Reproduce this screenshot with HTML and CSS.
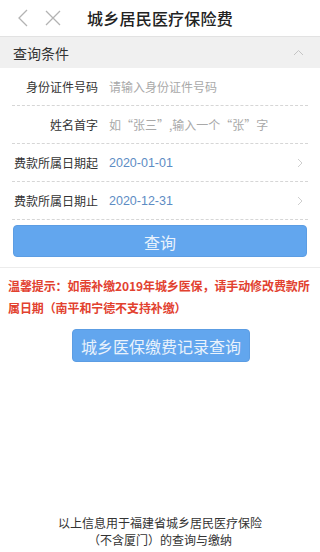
FILE: index.html
```html
<!DOCTYPE html>
<html lang="zh-CN">
<head>
  <meta charset="UTF-8">
  <meta name="viewport" content="width=device-width, initial-scale=1.0">
  <link rel="stylesheet" href="styles.css">
  <title>城乡居民医疗保险费</title>
</head>
<body>
  <div class="page">
    <div class="top-bar">
      <div class="top-icons">
        <svg class="icon-back" width="12" height="18" viewBox="0 0 12 18"><path d="M10 1 L2 9 L10 17" fill="none" stroke="#b3b3b3" stroke-width="1.3"/></svg>
        <svg class="icon-close" width="16" height="16" viewBox="0 0 16 16"><path d="M1 1 L15 15 M15 1 L1 15" fill="none" stroke="#b3b3b3" stroke-width="1.3"/></svg>
      </div>
      <h1 class="title">城乡居民医疗保险费</h1>
      <div></div>
    </div>

    <div class="section-head">
      <span>查询条件</span>
      <svg width="11" height="7" viewBox="0 0 11 7"><path d="M1 6 L5.5 1.5 L10 6" fill="none" stroke="#c4c4c4" stroke-width="1"/></svg>
    </div>

    <form class="query-form">
      <div class="form-row">
        <label>身份证件号码</label>
        <span class="placeholder">请输入身份证件号码</span>
      </div>
      <div class="form-row">
        <label>姓名首字</label>
        <span class="placeholder">如“张三”,输入一个“张”字</span>
      </div>
      <div class="form-row">
        <label>费款所属日期起</label>
        <span class="date">2020-01-01</span>
        <svg class="arrow" width="6" height="10" viewBox="0 0 6 10"><path d="M1 1 L5 5 L1 9" fill="none" stroke="#cfcfcf" stroke-width="1"/></svg>
      </div>
      <div class="form-row">
        <label>费款所属日期止</label>
        <span class="date">2020-12-31</span>
        <svg class="arrow" width="6" height="10" viewBox="0 0 6 10"><path d="M1 1 L5 5 L1 9" fill="none" stroke="#cfcfcf" stroke-width="1"/></svg>
      </div>
      <div class="btn-wrap">
        <a href="#" class="btn">查询</a>
      </div>
    </form>

    <p class="tip">温馨提示：如需补缴2019年城乡医保，请手动修改费款所属日期（南平和宁德不支持补缴）</p>

    <div class="record">
      <a href="#" class="btn btn-record">城乡医保缴费记录查询</a>
    </div>

    <div class="footer">
      <div>以上信息用于福建省城乡居民医疗保险</div>
      <div>（不含厦门）的查询与缴纳</div>
    </div>
  </div>
</body>
</html>
```

FILE: styles.css
```css
* {
  box-sizing: border-box;
}
body {
  margin: 0;
  padding: 0;
  background: #fff;
  color: #333;
  font-family: "Noto Sans CJK SC", "Noto Sans", sans-serif;
  font-size: 12px;
}
.page {
  display: flex;
  flex-direction: column;
  min-height: 552px;
}
.top-bar {
  display: grid;
  grid-template-columns: 1fr auto 1fr;
  align-items: center;
  height: 37px;
  border-bottom: 1px solid #e2e2e2;
}
.top-icons {
  display: flex;
  align-items: center;
  padding-left: 17px;
  gap: 16px;
}
.title {
  margin: 0;
  font-size: 16px;
  font-weight: 500;
  color: #222;
  letter-spacing: 0.2px;
}
.section-head {
  display: flex;
  align-items: center;
  justify-content: space-between;
  height: 31px;
  padding: 0 16px 0 13px;
  background: #f0f0f0;
  font-size: 14px;
  color: #333;
}
.query-form {
  margin: 0;
  padding-bottom: 10px;
  border-bottom: 1px solid #ececec;
}
.form-row {
  display: flex;
  align-items: center;
  height: 38px;
  margin: 0 12px;
  border-bottom: 1px dashed #d6d6d6;
}
.form-row label {
  width: 86px;
  flex: none;
  text-align: right;
  color: #333;
  font-size: 12px;
}
.form-row .placeholder {
  margin-left: 11px;
  color: #a9a9a9;
}
.form-row .date {
  margin-left: 11px;
  color: #5d8cc4;
  font-family: "Liberation Sans", sans-serif;
  font-size: 12.5px;
}
.form-row .arrow {
  margin-left: auto;
  margin-right: 5px;
}
.btn-wrap {
  padding: 5px 13px 0;
}
.btn {
  display: block;
  height: 32px;
  line-height: 32px;
  text-align: center;
  background: #62a6ee;
  border: 1px solid #5c9de3;
  border-radius: 4px;
  color: #e9f2fc;
  font-size: 16px;
  text-decoration: none;
}
.tip {
  margin: 7px 0 0;
  padding: 0 2px 0 8px;
  line-height: 22px;
  font-size: 12px;
  font-weight: bold;
  color: #e2412f;
  letter-spacing: -0.1px;
}
.record {
  display: flex;
  justify-content: center;
  padding: 10px 0 0 2px;
}
.btn-record {
  width: 178px;
  height: 33px;
  line-height: 33px;
}
.footer {
  margin-top: auto;
  padding-bottom: 4px;
  text-align: center;
  line-height: 17px;
  font-size: 12px;
  color: #333;
}
```
